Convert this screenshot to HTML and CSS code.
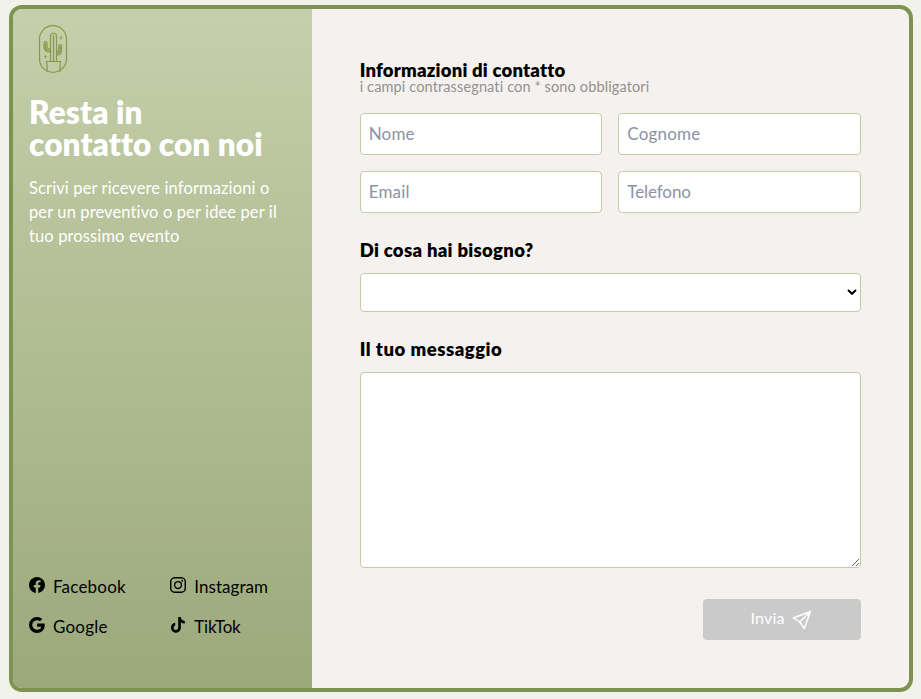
FILE: index.html
```html
<!DOCTYPE html>
<html lang="it">
<head>
<meta charset="utf-8">
<title>Contatti</title>
<link rel="stylesheet" href="styles.css">
</head>
<body>
<main class="card">
  <aside class="side">
    <svg class="logo" viewBox="0 0 48 48" fill="none" stroke="#8c974d" stroke-width="1.2">
      <rect x="10.5" y=".6" width="27" height="46.8" rx="13.5"/>
      <path d="M21.500 36V11a3 3 0 0 1 6 0v25M24.500 36V10M21.500 27h-1c-4 0-5.500-2-5.500-6v-3a1.500 1.500 0 0 1 3 0v3c0 2 1 3 3.500 3M16.500 18v4c0 2 1.500 3.500 5 3.500M27.500 30h1c3 0 4-2 4-5v-4a1.400 1.400 0 0 0-2.800 0v4c0 1.500-.700 2-2.200 2M31.200 21v4c0 2-1 3.500-3.700 3.500M18 47v-7.500l-.500-3h14l-.500 3V47"/>
      <path stroke-width=".8" d="M32 10.500v4.500M30.500 12.700h3M16.500 29.500v4M15 31.500h3"/>
    </svg>
    <h1>Resta in<br>contatto con noi</h1>
    <p class="intro">Scrivi per ricevere informazioni o<br>per un preventivo o per idee per il<br>tuo prossimo evento</p>
    <nav class="social">
      <a><svg viewBox="0 0 16 16"><path d="M16 8.049c0-4.446-3.582-8.050-8-8.050C3.580 0-.002 3.603-.002 8.050c0 4.017 2.926 7.347 6.750 7.951v-5.625h-2.030V8.050H6.750V6.275c0-2.017 1.195-3.131 3.022-3.131.876 0 1.791.157 1.791.157v1.980h-1.009c-.993 0-1.303.621-1.303 1.258v1.510h2.218l-.354 2.326H9.250V16c3.824-.604 6.750-3.934 6.750-7.951"/></svg><span class="wide">Facebook</span></a>
      <a><svg viewBox="0 0 16 16" fill="none" stroke="#000" stroke-width="1.45"><rect x=".72" y=".72" width="14.56" height="14.56" rx="4"/><circle cx="8" cy="8" r="3.400"/><circle cx="12.250" cy="3.750" r=".96" fill="#000" stroke="none"/></svg><span>Instagram</span></a>
      <a><svg viewBox="0 0 16 16"><path d="M15.545 6.558a9.420 9.420 0 0 1 .139 1.626c0 2.434-.870 4.492-2.384 5.885C11.978 15.292 10.158 16 8 16A8 8 0 1 1 8 0a7.700 7.700 0 0 1 5.352 2.082l-2.284 2.284A4.350 4.350 0 0 0 8 3.166c-2.087 0-3.860 1.408-4.492 3.304a4.800 4.800 0 0 0 0 3.063C4.143 11.427 5.913 12.835 8 12.835c1.078 0 2.004-.276 2.722-.764a3.700 3.700 0 0 0 1.599-2.431H8v-3.080z"/></svg><span class="wide">Google</span></a>
      <a><svg viewBox="0 0 16 16"><path d="M8.200 0h2.700c.1 2.200 1.600 3.700 3.900 3.900v2.700c-1.500 0-2.800-.5-3.900-1.300v5.400a5 5 0 1 1-5.700-4.950v2.800a2.300 2.300 0 1 0 3 2.200z"/></svg><span class="tiktok">TikTok</span></a>
    </nav>
  </aside>
  <form class="form">
    <h2>Informazioni di contatto</h2>
    <p class="note">i campi contrassegnati con * sono obbligatori</p>
    <div class="fields">
      <input placeholder="Nome" aria-label="Nome"><input placeholder="Cognome" aria-label="Cognome">
      <input placeholder="Email" aria-label="Email"><input class="telefono" placeholder="Telefono" aria-label="Telefono">
    </div>
    <h2 class="need">Di cosa hai bisogno?</h2>
    <div class="select-wrap"><select aria-label="Di cosa hai bisogno?"><option></option></select><svg viewBox="0 0 10 6" fill="none" stroke="#000" stroke-width="2"><path d="M1 1l4 3.800L9 1"/></svg></div>
    <h2 class="message">Il tuo messaggio</h2>
    <textarea aria-label="Il tuo messaggio"></textarea>
    <button type="button" disabled><span>Invia</span><svg viewBox="0 0 20 20" fill="none" stroke="#fff" stroke-width="1.450" stroke-linejoin="round"><path d="M18.500 1.500L1.300 8l6.500 4 4.500 6.500zM18.500 1.500L7.800 12"/></svg></button>
  </form>
</main>
</body>
</html>
```

FILE: styles.css
```css
* { box-sizing: border-box; }
body { margin: 0; padding: 5px 8px 7px 9px; background: #f1f3ea; font: 16px/24px Lato, sans-serif; font-variant-ligatures: none; color: #000; }
h1, h2, p { margin: 0; white-space: nowrap; }
.card { display: grid; grid-template-columns: 1fr 2fr; height: 687px; border: 4px solid #7e934f; border-radius: 13px; background: #f5f1ee; overflow: hidden; }
.side { display: flex; flex-direction: column; padding: 16px 16px 49px; background: linear-gradient(#c5cfaa, #9ca97b); color: #fff; }
.logo { width: 48px; height: 48px; }
h1 { margin-top: 23px; font-size: 31.5px; line-height: 32px; font-weight: 800; letter-spacing: .1px; }
.intro { margin-top: 16px; font-size: 16.5px; letter-spacing: .12px; }
.social { display: grid; grid-template-columns: 1fr 1fr; gap: 16px; margin-top: auto; color: #000; }
.social a { display: flex; gap: 8px; height: 24px; font-size: 17px; line-height: 24px; letter-spacing: .05px; }
.social .wide { letter-spacing: .2px; }
.social .tiktok { letter-spacing: -.2px; }
.social svg { width: 16px; height: 16px; margin-top: 2px; fill: #000; }
.social svg[fill="none"] { fill: none; }
.form { display: flex; flex-direction: column; padding: 48px; }
h2 { font-size: 18.5px; line-height: 26px; font-weight: 800; letter-spacing: .2px; }
.note { margin-top: -6px; font-size: 14.5px; line-height: 20px; letter-spacing: .13px; color: #929292; }
.fields { display: grid; grid-template-columns: 1fr 1fr; gap: 16px; margin-top: 16px; }
input, select, textarea { width: 100%; border: 1px solid #c0cca5; border-radius: 4px; background: #fff; font: inherit; }
input { min-width: 0; height: 42px; padding: 7px 8px 9px; font-size: 17px; letter-spacing: .2px; }
input.telefono { letter-spacing: -.1px; }
input::placeholder { color: #8b93a3; opacity: 1; }
.need { margin-top: 24px; letter-spacing: .3px; }
.select-wrap { display: grid; align-items: center; margin-top: 10px; height: 39px; }
.select-wrap > * { grid-area: 1 / 1; }
.select-wrap svg { width: 10px; height: 6px; justify-self: end; margin: 0 4px 1px 0; pointer-events: none; }
select { height: 39px; appearance: none; }
.message { margin-top: 24px; letter-spacing: .5px; }
textarea { display: block; height: 196px; margin-top: 10px; resize: vertical; }
button { display: flex; align-items: center; justify-content: center; align-self: flex-end; gap: 7px; width: 158px; height: 41px; margin-top: 31px; padding: 0 2px 0 0; border: 0; border-radius: 4px; background: #cacaca; color: #fff; font: inherit; }
button span { margin-top: -3px; letter-spacing: .2px; }
button svg { width: 20px; height: 20px; }
```
